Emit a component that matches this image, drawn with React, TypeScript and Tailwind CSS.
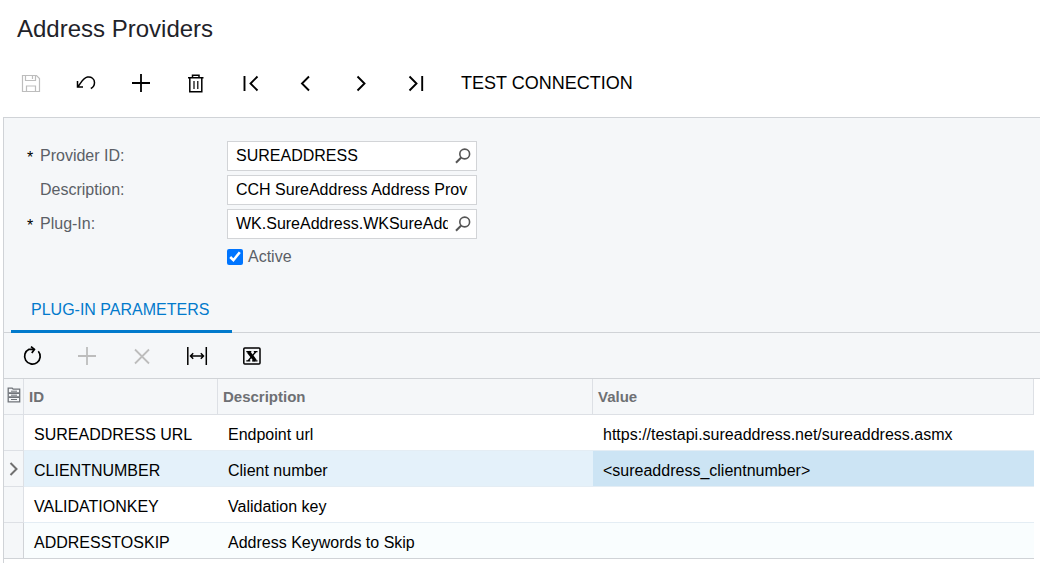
import React, { useState } from "react";
import clsx from "clsx";

interface ToolButtonProps {
  label: string;
  disabled?: boolean;
  children: React.ReactNode;
}

function ToolButton({ label, disabled, children }: ToolButtonProps) {
  return (
    <button
      type="button"
      aria-label={label}
      disabled={disabled}
      className={clsx("flex h-10 w-[55px] shrink-0 items-center justify-center", disabled ? "text-[#bdbdbd]" : "text-black")}
    >
      <svg width="21" height="21" viewBox="0 0 21 21" fill="none" stroke="currentColor" strokeWidth="1.5" aria-hidden="true">
        {children}
      </svg>
    </button>
  );
}

function SearchIcon() {
  return (
    <svg width="16" height="16" viewBox="0 0 16 16" fill="none" stroke="#555" strokeWidth="1.6" aria-hidden="true">
      <circle cx="9.7" cy="6" r="4.9" />
      <path d="M6.2 9.5L1 14.8" strokeWidth="2" />
    </svg>
  );
}

interface FieldProps {
  id: string;
  label: string;
  value: string;
  required?: boolean;
  lookup?: boolean;
}

function Field({ id, label, value, required, lookup }: FieldProps) {
  return (
    <div className="flex items-center">
      <label htmlFor={id} className="flex w-[223px] shrink-0 items-center pl-[23px] text-[#5b5f66]">
        <span className="w-[13px] pt-1 text-black">{required ? "*" : ""}</span>
        {label}
      </label>
      <div className="flex h-[30px] w-[250px] items-center border border-[#d2d4d7] bg-white px-2">
        <input id={id} defaultValue={value} className="h-7 min-w-0 flex-1 bg-transparent text-black outline-none" />
        {lookup && (
          <button type="button" aria-label={`Look up ${label}`} className="-mr-[3px] ml-[7px] shrink-0">
            <SearchIcon />
          </button>
        )}
      </div>
    </div>
  );
}

const rows = [
  { id: "SUREADDRESS URL", description: "Endpoint url", value: "https://testapi.sureaddress.net/sureaddress.asmx" },
  { id: "CLIENTNUMBER", description: "Client number", value: "<sureaddress_clientnumber>" },
  { id: "VALIDATIONKEY", description: "Validation key", value: "" },
  { id: "ADDRESSTOSKIP", description: "Address Keywords to Skip", value: "" },
];

function ParameterTable() {
  const [selected, setSelected] = useState(1);

  return (
    <table className="w-full table-fixed border-separate border-spacing-0 text-left">
      <colgroup>
        <col className="w-5" />
        <col className="w-[194px]" />
        <col className="w-[375px]" />
        <col />
      </colgroup>
      <thead>
        <tr className="h-9 bg-[#f5f7f9] text-[15px] text-[#6e7074]">
          <th className="border-r border-b border-[#dde0e5] p-0" aria-label="Row settings">
            <svg width="14" height="16" viewBox="0 0 14 16" fill="none" stroke="#70747a" strokeWidth="1.3" className="mb-[3px] ml-[3px]" aria-hidden="true">
              <path d="M1.2 1.2h4l1 1h6.5v12.6H1.2z" />
              <path d="M1.5 6.1h11M1.5 10.2h11" strokeWidth="1.8" />
              <path d="M4 4.2h6M4 8.2h6M4 12.5h6" strokeWidth="1" />
            </svg>
          </th>
          <th className="border-r border-b border-[#dde0e5] px-[5px] pt-0.5 pb-0">ID</th>
          <th className="border-r border-b border-[#dde0e5] px-[5px] pt-0.5 pb-0">Description</th>
          <th className="border-r border-b border-[#dde0e5] px-[5px] pt-0.5 pb-0">Value</th>
        </tr>
      </thead>
      <tbody>
        {rows.map((row, i) => {
          const active = i === selected;
          const last = i === rows.length - 1;
          const cell = clsx(
            "truncate border-b px-[10px] pt-1 pb-0",
            last ? "border-[#d0d3d7] bg-[#f9fdfe]" : "border-[#e4edf4]",
          );
          return (
            <tr key={row.id} onClick={() => setSelected(i)} className={clsx("h-9", active ? "bg-[#e4f1fa]" : "bg-white")}>
              <td className={clsx("border-r border-b bg-[#f5f7f9] p-0", last ? "border-[#d0d3d7]" : "border-[#dde0e5]")}>
                {active && (
                  <svg width="10" height="14" viewBox="0 0 10 14" fill="none" stroke="#707070" strokeWidth="2" className="ml-[5px]" aria-hidden="true">
                    <path d="M1.5 1l6 6-6 6" />
                  </svg>
                )}
              </td>
              <td className={cell}>{row.id}</td>
              <td className={cell}>{row.description}</td>
              <td className={clsx(cell, active && "bg-[#cce4f4]")}>{row.value}</td>
            </tr>
          );
        })}
      </tbody>
    </table>
  );
}

export default function App() {
  return (
    <div className="flex min-h-screen flex-col bg-white font-['Liberation_Sans',Arial,sans-serif] text-base text-black">
      <header>
        <h1 className="px-[17px] pt-[13px] text-2xl leading-8 text-[#1f2329]">Address Providers</h1>
        <div className="mt-[18px] mb-[14px] flex items-center pl-1">
          <ToolButton label="Save" disabled>
            <path d="M1.5 2.5h14l3 3v13h-17z" strokeWidth="1.2" />
            <path d="M4.5 3v4.5h10V3M11.5 3v3M5.5 18v-5h9v5" strokeWidth="1.2" />
          </ToolButton>
          <ToolButton label="Undo">
            <path d="M1.5 8v6H7M2 13.5C5 10 7 5 11.5 4.1c4-.7 7 2 7 5.4 0 3-1.5 5-3.7 6" />
          </ToolButton>
          <ToolButton label="Add">
            <path d="M1 10h18M10 1v18" strokeWidth="1.8" />
          </ToolButton>
          <ToolButton label="Delete">
            <path d="M2 4.7h15.5M6.5 4.5V2.3h6.5v2.2M3.8 5v13.7h12V5" />
            <path d="M8 8v8M11.8 8v8" strokeWidth="1.2" />
          </ToolButton>
          <ToolButton label="First record">
            <path d="M3.5 3v15M16.5 3.5l-7 7 7 7" strokeWidth="1.9" />
          </ToolButton>
          <ToolButton label="Previous record">
            <path d="M13 3.5l-7 7 7 7" strokeWidth="1.9" />
          </ToolButton>
          <ToolButton label="Next record">
            <path d="M6.5 3.5l7 7-7 7" strokeWidth="1.9" />
          </ToolButton>
          <ToolButton label="Last record">
            <path d="M3.5 3.5l7 7-7 7M16.2 3v15" strokeWidth="1.9" />
          </ToolButton>
          <button type="button" className="h-10 px-[17px] text-lg">
            TEST CONNECTION
          </button>
        </div>
      </header>

      <main className="ml-[3px] flex-1 border-t border-l border-[#d0d3d7]">
        <div className="bg-[#f5f7f9]">
          <form className="flex flex-col gap-1 pt-[23px]" onSubmit={(e) => e.preventDefault()}>
            <Field id="provider" label="Provider ID:" value="SUREADDRESS" required lookup />
            <Field id="description" label="Description:" value="CCH SureAddress Address Provider" />
            <Field id="plugin" label="Plug-In:" value="WK.SureAddress.WKSureAddressProvider" required lookup />
            <label className="ml-[223px] flex h-7 items-center gap-[5px] self-start text-[#5b5f66]">
              <input type="checkbox" defaultChecked className="size-4 accent-[#0075ff]" />
              Active
            </label>
          </form>

          <div role="tablist" className="mt-[14px] flex border-b border-[#d0d3d7] pl-[7px]">
            <button
              type="button"
              role="tab"
              aria-selected="true"
              className="-mb-px h-12 min-w-[221px] border-b-3 border-[#027acc] px-5 pt-1 text-left text-[#027acc]"
            >
              PLUG-IN PARAMETERS
            </button>
          </div>

          <div className="flex h-[46px] items-center border-b border-[#d0d3d7] pt-0.5 pl-px">
            <ToolButton label="Refresh">
              <path d="M16.3 5.2A7.8 7.8 0 1 1 7 3.3L12.3 3.3" strokeWidth="1.7" />
              <path d="M9 .6l3.4 2.7-2.6 3.6" strokeWidth="1.7" />
            </ToolButton>
            <ToolButton label="Add row" disabled>
              <path d="M1 10h18M10 1v18" strokeWidth="1.8" />
            </ToolButton>
            <ToolButton label="Delete row" disabled>
              <path d="M3 3.5l14 14M17 3.5l-14 14" strokeWidth="1.8" />
            </ToolButton>
            <ToolButton label="Fit columns">
              <path d="M.8 1v18M19.3 1v18M3.5 10h13M6.2 7.3L3.5 10l2.7 2.7M13.8 7.3l2.7 2.7-2.7 2.7" />
            </ToolButton>
            <ToolButton label="Export to Excel">
              <rect x="1.8" y="2" width="16.2" height="16" rx="1" />
              <path d="M6.3 5.7l7 9" strokeWidth="3.4" />
              <path d="M14 5.5L6 15M4.3 5.6h5M11.8 5.6h3.7M4.3 14.8h4M10 14.8h5.5" strokeWidth="1.3" />
            </ToolButton>
          </div>
        </div>
        <div className="pr-[6px]">
          <ParameterTable />
        </div>
      </main>
    </div>
  );
}
